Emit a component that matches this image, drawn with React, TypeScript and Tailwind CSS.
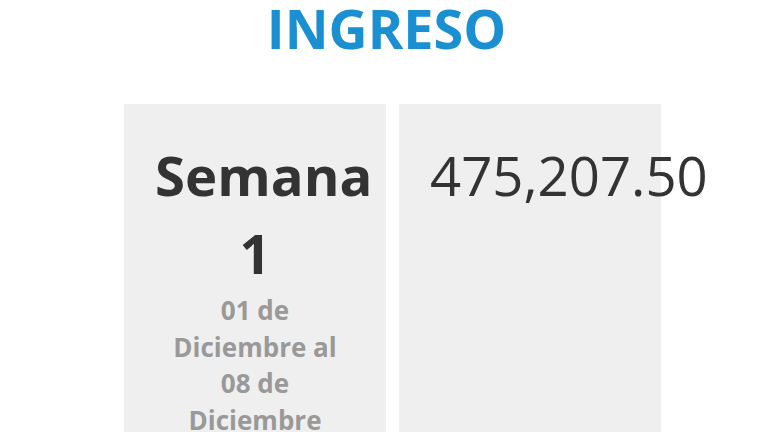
export default function App() {
  return (
    <div className="min-h-[432px] overflow-hidden bg-white font-['Open_Sans',sans-serif]">
      <h1 className="pl-[5px] text-center text-[54px] leading-[56px] font-bold text-[#1a8fd2]">
        INGRESO
      </h1>
      <div className="mt-[48px] flex gap-[13px] pl-[124px]">
        <div className="w-[262px] bg-[#efefef] px-[31px] pt-[32px] pb-10 text-center">
          <div className="text-[54.5px] leading-[78px] font-bold text-[#333]">Semana 1</div>
          <div className="px-[3px] text-[26px] leading-[36.5px] font-bold text-[#999]">
            01 de Diciembre al 08 de Diciembre
          </div>
        </div>
        <div className="w-[262px] bg-[#efefef] px-[31px] pt-[32px]">
          <div className="whitespace-nowrap text-[54.5px] leading-[78px] text-[#333]">475,207.50</div>
        </div>
      </div>
    </div>
  );
}
